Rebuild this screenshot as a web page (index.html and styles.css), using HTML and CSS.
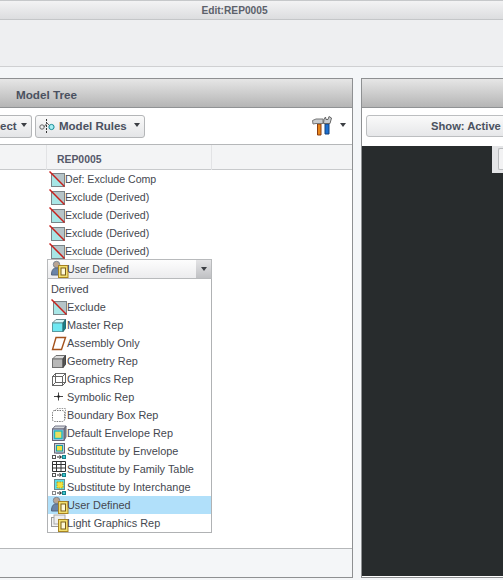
FILE: index.html
```html
<!DOCTYPE html>
<html lang="en">
<head>
    <meta charset="UTF-8">
    <title>Edit:REP0005</title>
    <link rel="stylesheet" href="styles.css">
</head>
<body>
<svg class="defs" width="0" height="0">
    <symbol id="i-exclude" viewBox="0 0 16 16">
        <rect x="2.5" y="2.5" width="13" height="13" fill="#a8e6e6" stroke="#7a8488"/>
        <path d="M3 3 H15 V15Z" fill="#b6c4c8"/>
        <path d="M0.5 0.5 L15.5 15.5" stroke="#c8201c" stroke-width="1.5"/>
    </symbol>
    <symbol id="i-user" viewBox="0 0 18 18">
        <circle cx="5.5" cy="4.5" r="3.2" fill="#b9a594" stroke="#7a8694"/>
        <path d="M0.5 15 C0.5 9 3 8 5.5 8 C8 8 10 9 10 15Z" fill="#6a84a8" stroke="#55657c"/>
        <rect x="7.5" y="5.5" width="9.5" height="12" fill="#f2e070" stroke="#a88420"/>
        <rect x="10" y="8" width="4.5" height="7" fill="#fdf8d8" stroke="#7a5e18"/>
    </symbol>
    <symbol id="i-master" viewBox="0 0 16 16">
        <path d="M1.5 6 L5 2.5 H14.5 L13 6Z" fill="#d8f6f8" stroke="#6a8a90"/>
        <rect x="1.5" y="6" width="10.5" height="8.5" fill="#6fe8f2" stroke="#5a9aa0"/>
        <path d="M12 6 L14.5 2.5 V11.5 L12 14.5Z" fill="#17838c" stroke="#2a6a70"/>
    </symbol>
    <symbol id="i-assembly" viewBox="0 0 16 16">
        <path d="M5 2.5 H14.5 L10.5 14.5 H1.5Z" fill="#fff" stroke="#a4521c" stroke-width="1.4"/>
    </symbol>
    <symbol id="i-geometry" viewBox="0 0 16 16">
        <path d="M1.5 6 L5 2.5 H14.5 L12 6Z" fill="#dcdcdc" stroke="#707070"/>
        <rect x="1.5" y="6" width="10.5" height="8.5" fill="#b8b8b8" stroke="#707070"/>
        <path d="M12 6 L14.5 2.5 V11.5 L12 14.5Z" fill="#555" stroke="#444"/>
    </symbol>
    <symbol id="i-graphics" viewBox="0 0 16 16">
        <rect x="1.5" y="5.5" width="10" height="9" fill="none" stroke="#666"/>
        <rect x="4.5" y="2.5" width="10" height="9" fill="none" stroke="#666"/>
        <path d="M1.5 5.5 L4.5 2.5 M11.5 5.5 L14.5 2.5 M11.5 14.5 L14.5 11.5 M1.5 14.5 L4.5 11.5" stroke="#666"/>
    </symbol>
    <symbol id="i-symbolic" viewBox="0 0 16 16">
        <path d="M3 7.5 H12 M7.5 3.5 V11.5" stroke="#333" stroke-width="0.9"/>
        <circle cx="7.5" cy="7.5" r="1.3" fill="#222"/>
    </symbol>
    <symbol id="i-boundary" viewBox="0 0 16 16">
        <rect x="1.5" y="3.5" width="12" height="11" rx="2" fill="none" stroke="#777" stroke-dasharray="1.5 1"/>
        <path d="M4 3.5 L6 1.5 H14.5 V11 L13.5 13" fill="none" stroke="#999" stroke-dasharray="1.5 1"/>
    </symbol>
    <symbol id="i-envelope" viewBox="0 0 16 16">
        <path d="M1.5 4 L4 1 H15 L13 4Z" fill="#d4d8dc" stroke="#778"/>
        <path d="M13 4 L15 1 V12 L13 15.5Z" fill="#8a8e92" stroke="#667"/>
        <rect x="1.5" y="4" width="11.5" height="11.5" fill="#a8c4e8" stroke="#667"/>
        <rect x="3.5" y="6" width="7.5" height="7.5" fill="#e8e060" stroke="#20b8c0" stroke-width="1.4"/>
    </symbol>
    <symbol id="i-sub-envelope" viewBox="0 0 16 16">
        <rect x="3.5" y="0.5" width="10" height="9.5" fill="#c0ccd8" stroke="#667"/>
        <rect x="5.5" y="2.5" width="6" height="5.5" fill="#f0e040" stroke="#18a0a8"/>
        <path d="M5 10.5 H12" stroke="#889"/>
        <rect x="1.5" y="12.5" width="3" height="3" fill="#fff" stroke="#555"/>
        <path d="M6 14 H10 M8.5 12.5 L10.5 14 L8.5 15.5" fill="none" stroke="#222"/>
        <rect x="11.5" y="12.5" width="3" height="3" fill="#40c8d0" stroke="#18808a"/>
    </symbol>
    <symbol id="i-sub-table" viewBox="0 0 16 16">
        <path d="M1.5 0.5 H14.5 V10.5 H1.5Z M1.5 3.5 H14.5 M1.5 7 H14.5 M5.5 0.5 V10.5 M10 0.5 V10.5" fill="#fff" stroke="#333"/>
        <rect x="1.5" y="12.5" width="3" height="3" fill="#fff" stroke="#555"/>
        <path d="M6 14 H10 M8.5 12.5 L10.5 14 L8.5 15.5" fill="none" stroke="#222"/>
        <rect x="11.5" y="12.5" width="3" height="3" fill="#40c8d0" stroke="#18808a"/>
    </symbol>
    <symbol id="i-sub-inter" viewBox="0 0 16 16">
        <rect x="3.5" y="0.5" width="10" height="10" fill="#58e0e8" stroke="#6a8a90"/>
        <rect x="6" y="3" width="6" height="6" fill="#f0e040" stroke="#b0a020" stroke-dasharray="1.5 1"/>
        <rect x="1.5" y="12.5" width="3" height="3" fill="#fff" stroke="#888"/>
        <path d="M6 14 H10 M8.5 12.5 L10.5 14 L8.5 15.5" fill="none" stroke="#222"/>
        <rect x="11.5" y="12.5" width="3" height="3" fill="#40c8d0" stroke="#18808a"/>
    </symbol>
    <symbol id="i-light" viewBox="0 0 18 18">
        <rect x="0.5" y="3.5" width="11" height="9" fill="#f2f2f2" stroke="#999"/>
        <rect x="3" y="1" width="11" height="9" fill="#eee" stroke="#aaa"/>
        <rect x="7.5" y="5.5" width="9.5" height="12" fill="#f2e070" stroke="#a88420"/>
        <rect x="10" y="8" width="4.5" height="7" fill="#fdf8d8" stroke="#7a5e18"/>
    </symbol>
</svg>

<div class="titlebar">Edit:REP0005</div>
<div class="ribbon"></div>

<div class="workspace">
    <section class="panel panel-tree">
        <div class="panel-head">Model Tree</div>
        <div class="tools">
            <button class="tool tool-cut">ect<span class="caret"></span></button>
            <button class="tool">
                <svg class="rules-icon" width="16" height="16" viewBox="0 0 16 16">
                    <circle cx="3" cy="9" r="2.2" fill="none" stroke="#666"/>
                    <circle cx="12.5" cy="9" r="2.6" fill="#a8eef2" stroke="#158a96"/>
                    <path d="M7.5 1 V15" stroke="#333" stroke-dasharray="2 1"/>
                    <path d="M5 9 L8 5 L10 7" fill="none" stroke="#666"/>
                </svg>
                Model Rules<span class="caret"></span>
            </button>
            <div class="tools-end">
                <svg width="20" height="20" viewBox="0 0 20 20">
                    <path d="M5.5 8 H9 V19 H5.5Z" fill="#e8861c" stroke="#8a3c10"/>
                    <path d="M0.5 4.5 L4 3 H11 V7.5 H4 L1 8Z" fill="#c8ccd0" stroke="#777"/>
                    <path d="M13 8 H17 V18 H13Z" fill="#1c70d0" stroke="#14407a"/>
                    <path d="M13.5 1 L14 3.5 L16 3.5 L17 0.5 L19.5 2 L18 7.5 H11.5 L12 3Z" fill="#c8ccd0" stroke="#666"/>
                </svg>
                <span class="caret"></span>
            </div>
        </div>
        <div class="columns">
            <div class="col"></div>
            <div class="col">REP0005</div>
            <div class="col col-last"></div>
        </div>
        <div class="tree">
            <div class="row"><svg class="ico"><use href="#i-exclude"/></svg>Def: Exclude Comp</div>
            <div class="row"><svg class="ico"><use href="#i-exclude"/></svg>Exclude (Derived)</div>
            <div class="row"><svg class="ico"><use href="#i-exclude"/></svg>Exclude (Derived)</div>
            <div class="row"><svg class="ico"><use href="#i-exclude"/></svg>Exclude (Derived)</div>
            <div class="row"><svg class="ico"><use href="#i-exclude"/></svg>Exclude (Derived)</div>
            <div class="combo">
                <svg class="ico ico-wide"><use href="#i-user"/></svg>User Defined
                <span class="combo-arrow"><span class="caret"></span></span>
            </div>
            <ul class="options">
                <li>Derived</li>
                <li><svg class="ico"><use href="#i-exclude"/></svg>Exclude</li>
                <li><svg class="ico"><use href="#i-master"/></svg>Master Rep</li>
                <li><svg class="ico"><use href="#i-assembly"/></svg>Assembly Only</li>
                <li><svg class="ico"><use href="#i-geometry"/></svg>Geometry Rep</li>
                <li><svg class="ico"><use href="#i-graphics"/></svg>Graphics Rep</li>
                <li><svg class="ico"><use href="#i-symbolic"/></svg>Symbolic Rep</li>
                <li><svg class="ico"><use href="#i-boundary"/></svg>Boundary Box Rep</li>
                <li><svg class="ico"><use href="#i-envelope"/></svg>Default Envelope Rep</li>
                <li><svg class="ico"><use href="#i-sub-envelope"/></svg>Substitute by Envelope</li>
                <li><svg class="ico"><use href="#i-sub-table"/></svg>Substitute by Family Table</li>
                <li><svg class="ico"><use href="#i-sub-inter"/></svg>Substitute by Interchange</li>
                <li class="selected"><svg class="ico ico-wide"><use href="#i-user"/></svg>User Defined</li>
                <li><svg class="ico ico-wide"><use href="#i-light"/></svg>Light Graphics Rep</li>
            </ul>
        </div>
        <div class="panel-foot"></div>
    </section>

    <section class="panel panel-view">
        <div class="panel-head"></div>
        <div class="view-tools">
            <button class="show">Show: Active</button>
        </div>
        <div class="viewport">
            <div class="view-tab"><span></span></div>
        </div>
    </section>
</div>
</body>
</html>
```

FILE: styles.css
```css
* {
    box-sizing: border-box;
}

html, body {
    margin: 0;
    height: 580px;
    overflow: hidden;
}

body {
    font-family: "Liberation Sans", Arial, sans-serif;
    font-size: 10.6px;
    color: #4a4e58;
    background-color: #f4f6f8;
}

.defs {
    display: block;
    height: 0;
}

.titlebar {
    height: 20px;
    padding-right: 34px;
    border-top: 1px solid #c6c8ca;
    border-bottom: 1px solid #c4c6c8;
    background: linear-gradient(#f3f3f4, #dcdddf);
    font-weight: bold;
    font-size: 10.2px;
    line-height: 19px;
    text-align: center;
    color: #5c616b;
}

.ribbon {
    height: 47px;
    background-color: #eeeff1;
    border-bottom: 1px solid #cfd0d2;
}

.workspace {
    display: flex;
    gap: 8px;
    height: 500px;
    margin-top: 11px;
}

.panel {
    display: flex;
    flex-direction: column;
    overflow: hidden;
    border: 1px solid #8e9092;
}

.panel-tree {
    flex: none;
    width: 353px;
    border-left: none;
}

.panel-view {
    flex: 1;
    border-right: none;
    background-color: #fff;
}

.panel-head {
    flex: none;
    height: 29px;
    padding-left: 16px;
    border-bottom: 1px solid #909294;
    background: linear-gradient(#e6e6e6, #b5b5b5);
    font-weight: bold;
    font-size: 11.7px;
    line-height: 32px;
    color: #4a5160;
}

.tools {
    flex: none;
    display: flex;
    align-items: center;
    gap: 3px;
    height: 37px;
    background-color: #fff;
    border-bottom: 1px solid #b5b7b9;
}

.tool {
    display: flex;
    align-items: center;
    height: 23px;
    padding: 0 0 0 3px;
    border: 1px solid #b4b6b8;
    border-radius: 3px;
    background: linear-gradient(#fafafa, #e4e5e7);
    font: bold 11.5px "Liberation Sans", Arial, sans-serif;
    color: #4a5160;
    width: 110px;
}

.tool-cut {
    width: 32px;
    padding-left: 0;
    border-left: none;
    border-radius: 0 3px 3px 0;
}

.rules-icon {
    margin-right: 4px;
}

.caret {
    display: inline-block;
    width: 0;
    height: 0;
    border-left: 3px solid transparent;
    border-right: 3px solid transparent;
    border-top: 4px solid #3c3f44;
}

.tool .caret {
    margin-left: auto;
    margin-right: 4px;
    margin-top: -3px;
}

.tools-end {
    display: flex;
    align-items: center;
    gap: 8px;
    margin-left: auto;
    margin-right: 6px;
}

.tools-end .caret {
    margin-top: -2px;
}

.columns {
    flex: none;
    display: grid;
    grid-template-columns: 47px 165px 1fr;
    height: 25px;
    background-color: #f3f4f5;
    border-bottom: 1px solid #c8cacc;
}

.col {
    padding-left: 10px;
    border-right: 1px solid #e2e3e5;
    font-weight: bold;
    font-size: 10.4px;
    line-height: 29px;
    color: #55596a;
}

.col-last {
    border-right: none;
}

.tree {
    flex: 1;
    padding-left: 47px;
    background-color: #fff;
    line-height: 18px;
    color: #454850;
}

.row {
    display: flex;
    align-items: center;
    height: 18px;
    padding-left: 2px;
}

.ico {
    flex: none;
    width: 16px;
    height: 16px;
}

.ico-wide {
    width: 18px;
    height: 18px;
    margin-right: -2px;
}

.combo {
    display: flex;
    align-items: center;
    width: 165px;
    height: 20px;
    margin-top: -1px;
    padding-left: 3px;
    border: 1px solid #b8babc;
    background: linear-gradient(#fdfdfd, #ececee);
}

.combo-arrow {
    display: flex;
    align-items: center;
    justify-content: center;
    width: 15px;
    height: 18px;
    margin-left: auto;
    background: linear-gradient(#e4e4e6, #c0c1c4);
}

.options {
    width: 165px;
    height: 254px;
    margin: 0;
    padding: 1px 0 0;
    list-style: none;
    border: 1px solid #b0b2b4;
    border-top: none;
    background-color: #fff;
    font-size: 10.9px;
}

.options li {
    display: flex;
    align-items: center;
    height: 18px;
    padding-left: 3px;
}

.options .selected {
    background-color: #b1e0fa;
}

.panel-foot {
    flex: none;
    height: 29px;
    border-top: 1px solid #b5b7b9;
    background-color: #f4f6f8;
}

.view-tools {
    flex: none;
    height: 38px;
    padding: 7px 0 0 4px;
    background-color: #fff;
}

.show {
    display: block;
    width: 300px;
    height: 22px;
    padding: 0 0 0 64px;
    border: 1px solid #bcbec0;
    border-radius: 3px;
    background: linear-gradient(#fafafa, #e6e7e9);
    font: bold 11.2px "Liberation Sans", Arial, sans-serif;
    color: #4a5160;
    text-align: left;
}

.viewport {
    position: relative;
    flex: 1;
    margin-bottom: 1px;
    background-color: #282c2d;
}

.view-tab {
    position: absolute;
    top: 0;
    right: 0;
    width: 11px;
    height: 27px;
    padding: 2px 0 0 6px;
    background-color: #e4e5e7;
}

.view-tab span {
    display: block;
    height: 22px;
    border: 1px solid #b8babc;
    border-right: none;
    border-radius: 2px 0 0 2px;
    background-color: #f2f2f3;
}
```
